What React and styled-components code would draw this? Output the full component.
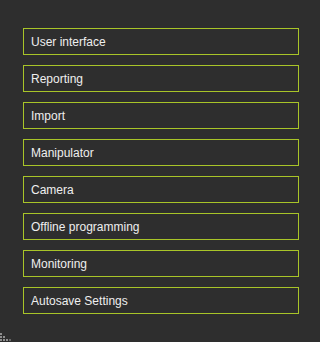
import React from 'react';
import styled, { createGlobalStyle } from 'styled-components';

const items = [
  'User interface',
  'Reporting',
  'Import',
  'Manipulator',
  'Camera',
  'Offline programming',
  'Monitoring',
  'Autosave Settings',
];

export default function App() {
  return (
    <>
      <Global />
      <Page>
        <List>
          {items.map(label => (
            <Item key={label}>{label}</Item>
          ))}
        </List>
        <Grip width="12" height="9" viewBox="0 0 12 9">
          <rect x="0" y="0" width="2" height="2" />
          <rect x="0" y="3" width="2" height="2" />
          <rect x="3" y="3" width="2" height="2" />
          <rect x="0" y="6" width="2" height="2" />
          <rect x="3" y="6" width="2" height="2" />
          <rect x="6" y="6" width="2" height="2" />
          <rect x="9" y="6" width="2" height="2" opacity="0.6" />
        </Grip>
      </Page>
    </>
  );
}

const Global = createGlobalStyle`
  html, body {
    margin: 0;
    padding: 0;
    background: #2e2e2e;
  }
`;

const Page = styled.div`
  display: flex;
  flex-direction: column;
  height: 342px;
  box-sizing: border-box;
  padding-top: 28px;
  font-family: "Liberation Sans", Arial, sans-serif;
`;

const List = styled.div`
  display: flex;
  flex-direction: column;
  gap: 10px;
  margin-left: 23px;
  width: 276px;
`;

const Item = styled.div`
  box-sizing: border-box;
  height: 27px;
  border: 1px solid #a8c428;
  padding-left: 7px;
  display: flex;
  align-items: center;
  color: #efefef;
  font-size: 12px;
  cursor: pointer;
`;

const Grip = styled.svg`
  margin-top: auto;
  margin-bottom: 0;
  fill: #8e8e8e;
`;
